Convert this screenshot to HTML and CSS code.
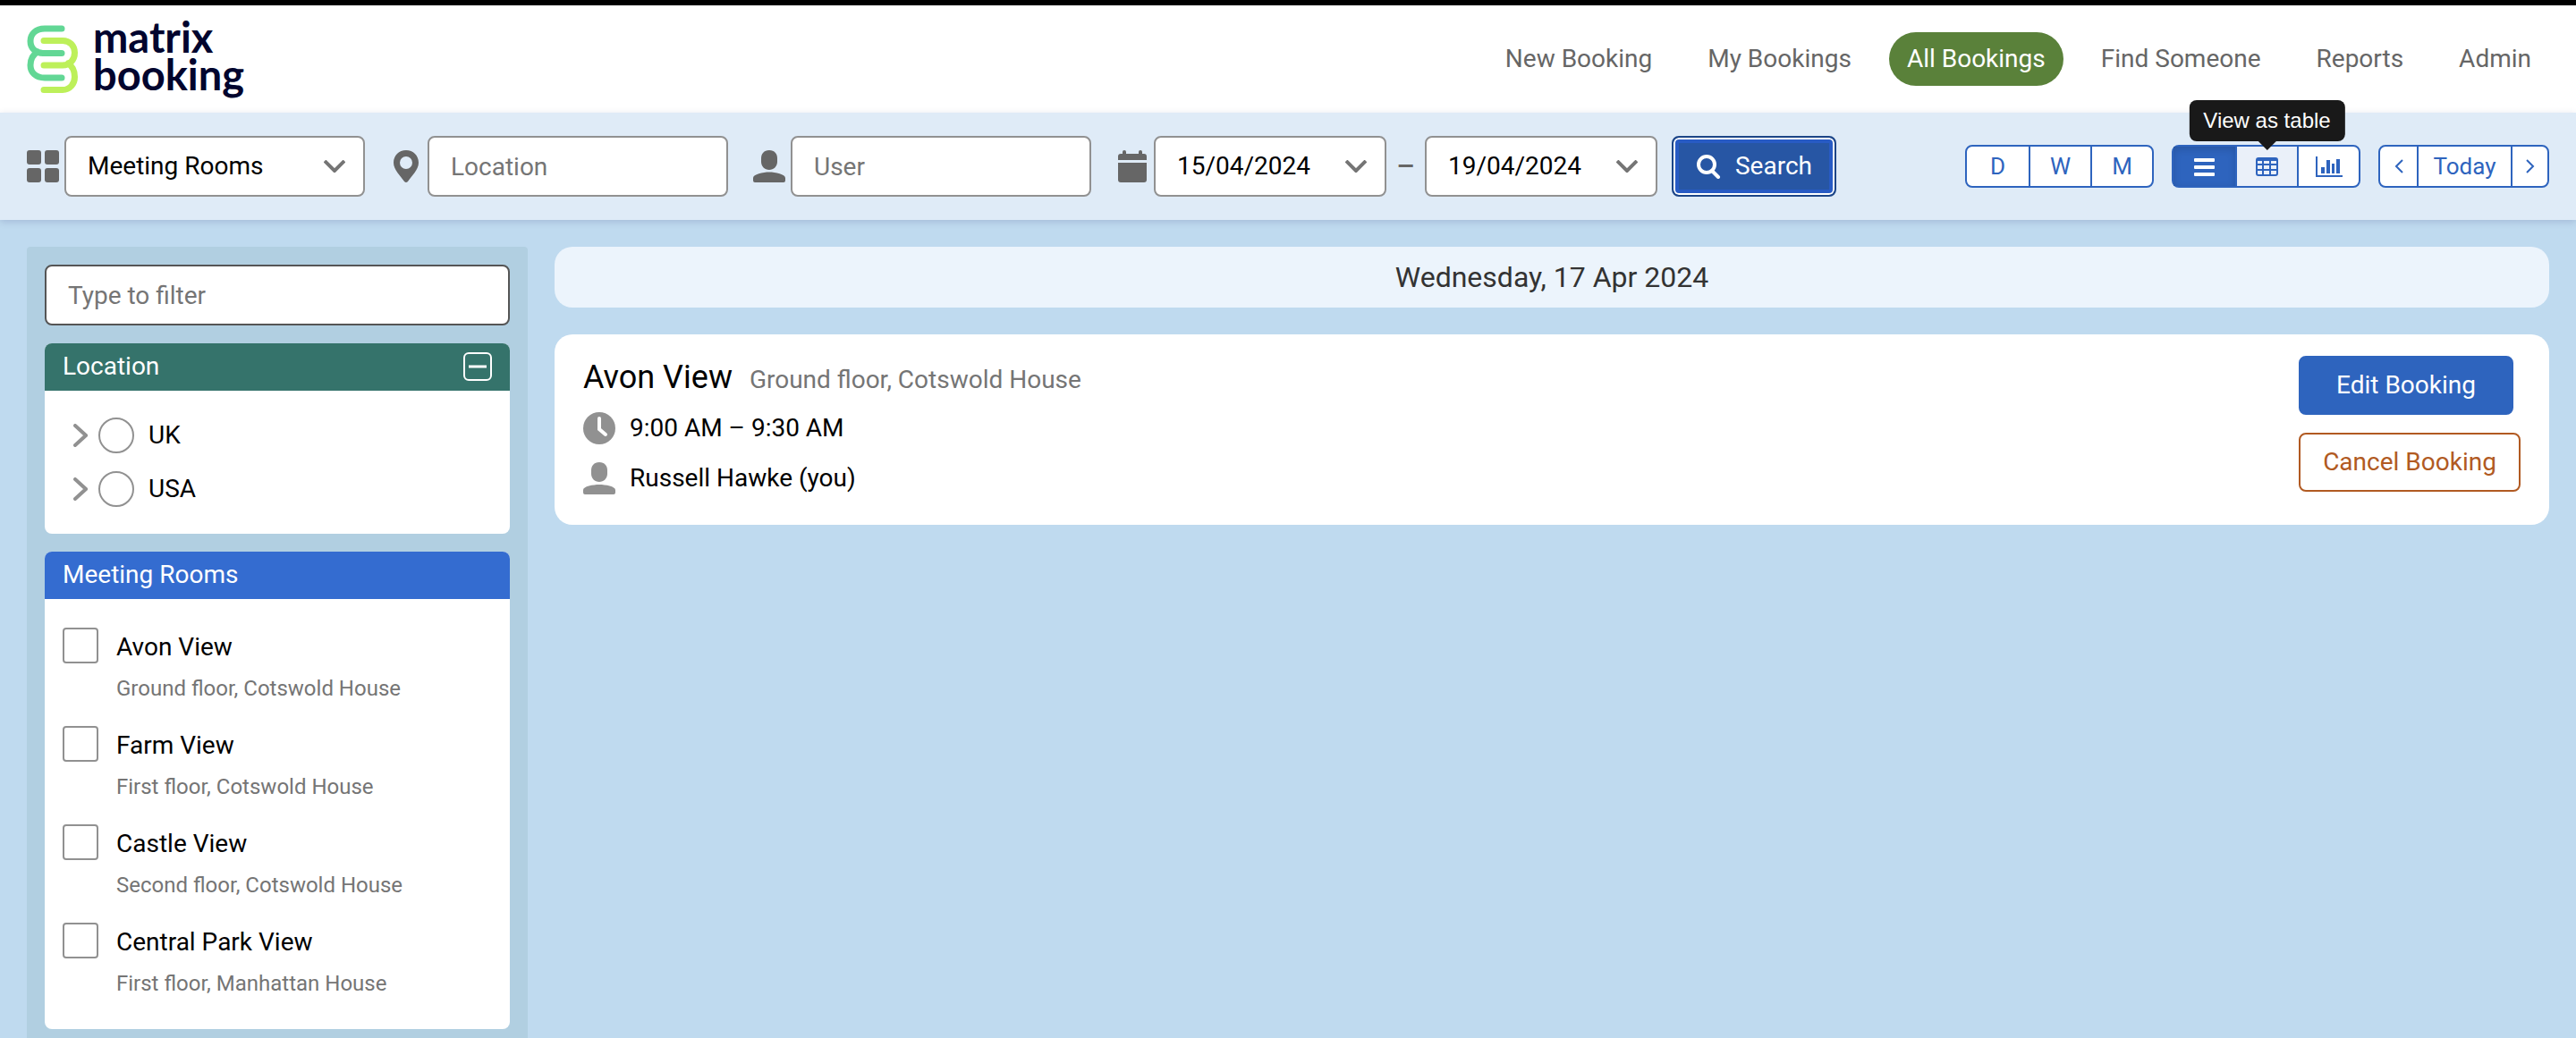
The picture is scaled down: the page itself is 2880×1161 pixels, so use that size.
FILE: index.html
```html
<!DOCTYPE html>
<html lang="en">
<head>
    <meta charset="UTF-8">
    <meta name="viewport" content="width=device-width, initial-scale=1.0">
    <title>All Bookings - Matrix Booking</title>
    <link rel="stylesheet" href="styles.css">
</head>
<body>

<header class="header">
    <a class="logo" href="#">
        <svg class="logo-mark" viewBox="0 0 58 77" fill="none" stroke-width="7" stroke-linecap="round" aria-hidden="true">
            <path stroke="#bdf05a" d="M19 17.500H40C48 17.500 53.500 23 53.500 31C53.500 39 48 45 40 45H19M46 43C51 46 53.500 51 53.500 58C53.500 66 48 72.500 40 72.500H19"/>
            <path stroke="#62d795" d="M39 4H20C10 4 4 10 4 18C4 26 10 31.500 18 31.500H39M12 30C7 33 4 38 4 45C4 53 10 59 20 59H39"/>
        </svg>
        <span class="logo-text">matrix<br>booking</span>
    </a>
    <nav class="nav">
        <a href="#">New Booking</a>
        <a href="#">My Bookings</a>
        <a href="#" class="active">All Bookings</a>
        <a href="#">Find Someone</a>
        <a href="#">Reports</a>
        <a href="#">Admin</a>
    </nav>
</header>

<form class="search-bar">
    <div class="field">
        <svg class="icon" viewBox="0 0 36 36" aria-hidden="true"><rect width="16" height="16" rx="3"/><rect x="20" width="16" height="16" rx="3"/><rect y="20" width="16" height="16" rx="3"/><rect x="20" y="20" width="16" height="16" rx="3"/></svg>
        <select class="control" aria-label="Resource type">
            <option>Meeting Rooms</option>
        </select>
    </div>
    <div class="field">
        <svg class="icon" viewBox="0 0 36 36" aria-hidden="true"><path fill-rule="evenodd" d="M18 0C10 0 4 6 4 14C4 22 12 29 16 35Q18 37 20 35C24 29 32 22 32 14C32 6 26 0 18 0ZM18 7A7 7 0 1 1 18 21A7 7 0 1 1 18 7Z"/></svg>
        <input class="control" type="text" placeholder="Location" aria-label="Location">
    </div>
    <div class="field">
        <svg class="icon" viewBox="0 0 36 36" aria-hidden="true"><path d="M18 0C24 0 27 4 27 9V13C27 18 23 22 18 22C13 22 9 18 9 13V9C9 4 12 0 18 0ZM0 31C0 27 11 24.500 18 24.500C25 24.500 36 27 36 31V34Q36 36 34 36H2Q0 36 0 34Z"/></svg>
        <input class="control" type="text" placeholder="User" aria-label="User">
    </div>
    <div class="field">
        <svg class="icon" viewBox="0 0 36 36" aria-hidden="true"><path d="M2 11V7Q2 4 5 4H7V2Q7 0 9 0Q11 0 11 2V4H25V2Q25 0 27 0Q29 0 29 2V4H31Q34 4 34 7V11ZM2 14H34V33Q34 36 31 36H5Q2 36 2 33Z"/></svg>
        <select class="control date" aria-label="From date">
            <option>15/04/2024</option>
        </select>
        <span class="dash">–</span>
        <select class="control date" aria-label="To date">
            <option>19/04/2024</option>
        </select>
        <button class="search-button" type="button">
            <svg viewBox="0 0 28 28" fill="none" stroke="#fff" stroke-width="4" stroke-linecap="round" aria-hidden="true"><circle cx="12" cy="12" r="9"/><path d="M18 19L25 26"/></svg>
            Search
        </button>
    </div>

    <div class="views">
        <div class="button-group">
            <button type="button">D</button>
            <button type="button">W</button>
            <button type="button">M</button>
        </div>
        <div class="button-group">
            <button type="button" class="selected" aria-label="View as list">
                <svg viewBox="0 0 26 26" fill="#fff" aria-hidden="true"><rect x="1" y="4" width="23" height="4" rx="1"/><rect x="1" y="12" width="23" height="4" rx="1"/><rect x="1" y="20" width="23" height="4" rx="1"/></svg>
            </button>
            <button type="button" class="hovered" aria-label="View as table">
                <svg viewBox="0 0 26 26" fill="none" stroke="#2e64be" stroke-width="2" aria-hidden="true"><rect x="1" y="4" width="23" height="19" rx="2"/><path d="M1 6H24M1 11H24M1 17H24M8 5V23M16 5V23"/></svg>
                <span class="tooltip" role="tooltip">View as table</span>
            </button>
            <button type="button" aria-label="View as chart">
                <svg viewBox="0 0 30 26" fill="#2e64be" aria-hidden="true"><path d="M0 2H2V23H30V25H0ZM6 14H10V21H6ZM12 6H16V21H12ZM18 10H21V21H18ZM23 5H27V21H23Z"/></svg>
            </button>
        </div>
        <div class="button-group stepper">
            <button type="button" aria-label="Previous">
                <svg viewBox="0 0 12 18" fill="none" stroke="#2e64be" stroke-width="2" aria-hidden="true"><path d="M10 2L3 9L10 16"/></svg>
            </button>
            <button type="button" class="today">Today</button>
            <button type="button" aria-label="Next">
                <svg viewBox="0 0 12 18" fill="none" stroke="#2e64be" stroke-width="2" aria-hidden="true"><path d="M2 2L9 9L2 16"/></svg>
            </button>
        </div>
    </div>
</form>

<main class="content">
    <aside class="sidebar">
        <input class="control filter" type="text" placeholder="Type to filter" aria-label="Type to filter">

        <section class="panel">
            <h2 class="panel-title location-title">
                Location
                <button type="button" class="collapse" aria-label="Collapse">
                    <svg viewBox="0 0 32 32" fill="none" stroke="#fff" stroke-width="2" aria-hidden="true"><rect x="1" y="1" width="30" height="30" rx="5"/><path d="M6 16H26" stroke-width="3"/></svg>
                </button>
            </h2>
            <ul class="locations">
                <li>
                    <button type="button" class="expand" aria-label="Expand UK"><svg viewBox="0 0 16 26" fill="none" stroke="#919191" stroke-width="4" stroke-linecap="round" aria-hidden="true"><path d="M2 2L14 13L2 24"/></svg></button>
                    <input type="radio" name="location" id="uk">
                    <label for="uk">UK</label>
                </li>
                <li>
                    <button type="button" class="expand" aria-label="Expand USA"><svg viewBox="0 0 16 26" fill="none" stroke="#919191" stroke-width="4" stroke-linecap="round" aria-hidden="true"><path d="M2 2L14 13L2 24"/></svg></button>
                    <input type="radio" name="location" id="usa">
                    <label for="usa">USA</label>
                </li>
            </ul>
        </section>

        <section class="panel">
            <h2 class="panel-title">Meeting Rooms</h2>
            <ul class="rooms">
                <li>
                    <input type="checkbox" id="avon">
                    <label for="avon">Avon View<small>Ground floor, Cotswold House</small></label>
                </li>
                <li>
                    <input type="checkbox" id="farm">
                    <label for="farm">Farm View<small>First floor, Cotswold House</small></label>
                </li>
                <li>
                    <input type="checkbox" id="castle">
                    <label for="castle">Castle View<small>Second floor, Cotswold House</small></label>
                </li>
                <li>
                    <input type="checkbox" id="central">
                    <label for="central">Central Park View<small>First floor, Manhattan House</small></label>
                </li>
            </ul>
        </section>
    </aside>

    <section class="bookings">
        <h2 class="day">Wednesday, 17 Apr 2024</h2>
        <article class="booking">
            <div class="details">
                <h3>Avon View <span>Ground floor, Cotswold House</span></h3>
                <p>
                    <svg class="icon" viewBox="0 0 36 36" aria-hidden="true"><circle cx="18" cy="18" r="18"/><path d="M18 7V19L25 25" fill="none" stroke="#fff" stroke-width="4" stroke-linecap="round"/></svg>
                    9:00 AM – 9:30 AM
                </p>
                <p>
                    <svg class="icon" viewBox="0 0 36 36" aria-hidden="true"><path d="M18 0C24 0 27 4 27 9V13C27 18 23 22 18 22C13 22 9 18 9 13V9C9 4 12 0 18 0ZM0 31C0 27 11 25 18 25C25 25 36 27 36 31V34Q36 36 34 36H2Q0 36 0 34Z"/></svg>
                    Russell Hawke (you)
                </p>
            </div>
            <div class="actions">
                <button type="button" class="edit">Edit Booking</button>
                <button type="button" class="cancel">Cancel Booking</button>
            </div>
        </article>
    </section>
</main>

</body>
</html>
```
FILE: styles.css
```css
* {
    box-sizing: border-box;
}

body {
    margin: 0;
    min-height: 100vh;
    display: flex;
    flex-direction: column;
    font-family: Roboto, Arial, sans-serif;
    font-size: 28px;
    line-height: 36px;
    color: #000;
    background: #bfdaef;
}

button,
input,
select {
    font: inherit;
    margin: 0;
}

button {
    cursor: pointer;
}

h2,
h3,
p,
ul {
    margin: 0;
    padding: 0;
    font-weight: 400;
    list-style: none;
}

/* header */
.header {
    display: flex;
    justify-content: space-between;
    align-items: center;
    height: 126px;
    padding: 0 30px;
    border-top: 6px solid #000;
    background: #fff;
}

.logo {
    display: flex;
    align-items: center;
    gap: 16px;
    color: #02052e;
    text-decoration: none;
}

.logo-mark {
    width: 58px;
    height: 77px;
}

.logo-text {
    font-family: Lato, sans-serif;
    font-size: 47px;
    font-weight: 700;
    line-height: 42px;
    padding-bottom: 8px;
}

.nav {
    display: flex;
    gap: 22px;
}

.nav a {
    padding: 12px 20px;
    border-radius: 30px;
    color: #666;
    text-decoration: none;
}

.nav .active {
    background: #5a813a;
    color: #fff;
}

/* search bar */
.search-bar {
    display: flex;
    align-items: center;
    gap: 28px;
    height: 120px;
    padding: 0 30px;
    background: #dfebf7;
    box-shadow: 0 2px 8px rgba(0, 0, 80, 0.15);
}

.field {
    display: flex;
    align-items: center;
    gap: 6px;
}

.icon {
    flex: none;
    width: 36px;
    height: 36px;
    fill: #666;
}

.control {
    width: 336px;
    height: 68px;
    padding: 0 24px;
    border: 2px solid #919191;
    border-radius: 8px;
    background: #fff;
    color: #000;
    outline: none;
}

.control::placeholder {
    color: #757575;
    opacity: 1;
}

select.control {
    appearance: none;
    background: #fff url("data:image/svg+xml,%3Csvg xmlns='http://www.w3.org/2000/svg' viewBox='0 0 24 14' fill='none' stroke='%23757575' stroke-width='4'%3E%3Cpath d='M1 1L12 12L23 1'/%3E%3C/svg%3E") no-repeat right 20px center / 24px 14px;
}

.control.date {
    width: 260px;
}

.dash {
    width: 31px;
    text-align: center;
    color: #666;
    font-size: 32px;
    font-weight: 500;
}

.search-button {
    display: flex;
    align-items: center;
    justify-content: center;
    gap: 16px;
    width: 184px;
    height: 68px;
    margin-left: 10px;
    border: 2px solid #1c4587;
    border-radius: 8px;
    background: #2756a4;
    box-shadow: inset 0 0 0 2px #fff, inset 0 0 0 6px #285bc4;
    color: #fff;
}

.search-button svg {
    width: 28px;
    height: 28px;
}

.views {
    display: flex;
    gap: 20px;
    margin-left: auto;
}

.button-group {
    display: flex;
    height: 48px;
    border: 2px solid #2e64be;
    border-radius: 8px;
    background: #fff;
}

.button-group button {
    position: relative;
    display: flex;
    align-items: center;
    justify-content: center;
    width: 69px;
    padding: 0;
    border: 0;
    background: none;
    color: #2e64be;
    font-size: 26px;
}

.button-group button + button {
    border-left: 2px solid #2e64be;
}

.button-group svg {
    height: 26px;
}

.button-group .selected {
    background: #2e64be;
    box-shadow: inset 0 3px 8px rgba(0, 0, 0, 0.15);
}

.button-group .hovered {
    background: #eaf0f9;
}

.stepper button {
    width: 41px;
}

.stepper .today {
    width: 105px;
}

.stepper svg {
    height: 18px;
}

.tooltip {
    position: absolute;
    bottom: calc(100% + 6px);
    left: 50%;
    transform: translateX(-50%);
    padding: 5px 16px;
    border-radius: 8px;
    background: #191919;
    color: #fff;
    font-family: "Liberation Sans", Arial, sans-serif;
    font-size: 24px;
    white-space: nowrap;
}

.tooltip::after {
    content: "";
    position: absolute;
    top: 100%;
    left: 50%;
    margin-left: -10px;
    border: 10px solid transparent;
    border-top-color: #191919;
    border-bottom: 0;
}

/* sidebar */
.content {
    flex: 1;
    display: flex;
    align-items: stretch;
    gap: 30px;
    padding: 30px 30px 0;
}

.sidebar {
    flex: none;
    display: flex;
    flex-direction: column;
    gap: 20px;
    width: 560px;
    padding: 20px 20px 10px;
    border-radius: 4px 4px 0 0;
    background: #b1cfe1;
}

.filter {
    width: 100%;
    border-color: #555;
}

.panel {
    border-radius: 8px;
    background: #fff;
    overflow: hidden;
}

.panel-title {
    display: flex;
    justify-content: space-between;
    align-items: center;
    height: 53px;
    padding: 0 20px 2px;
    background: #346cd0;
    color: #fff;
    font-size: 28px;
}

.location-title {
    background: #35736b;
}

.collapse {
    width: 32px;
    height: 32px;
    padding: 0;
    border: 0;
    background: none;
}

.collapse svg {
    display: block;
}

.locations {
    padding: 20px 32px;
}

.locations li {
    display: flex;
    align-items: center;
    height: 60px;
}

.expand {
    width: 16px;
    height: 26px;
    margin-right: 12px;
    padding: 0;
    border: 0;
    background: none;
}

.expand svg {
    display: block;
}

input[type="radio"],
input[type="checkbox"] {
    flex: none;
    appearance: none;
    width: 40px;
    height: 40px;
    border: 2px solid #919191;
    border-radius: 4px;
    background: #fff;
}

input[type="radio"] {
    margin-right: 16px;
    border-radius: 50%;
}

.rooms {
    display: flex;
    flex-direction: column;
    gap: 22px;
    padding: 32px 20px 31px;
}

.rooms li {
    display: flex;
    gap: 20px;
}

.rooms label {
    padding-top: 4px;
}

.rooms small {
    display: block;
    padding-top: 8px;
    color: #757575;
    font-size: 24px;
    line-height: 40px;
}

/* bookings */
.bookings {
    flex: 1;
}

.day {
    margin-bottom: 30px;
    padding: 16px;
    border-radius: 20px;
    background: #ecf4fc;
    color: #333;
    font-size: 32px;
    text-align: center;
}

.booking {
    display: flex;
    justify-content: space-between;
    padding: 24px 32px 34px;
    border-radius: 20px;
    background: #fff;
}

.details h3 {
    margin-bottom: 12px;
    font-size: 36px;
    line-height: 48px;
}

.details h3 span {
    margin-left: 10px;
    color: #757575;
    font-size: 28px;
}

.details p {
    display: flex;
    align-items: center;
    gap: 16px;
}

.details p + p {
    margin-top: 20px;
}

.details .icon {
    fill: #919191;
}

.actions {
    display: flex;
    flex-direction: column;
    align-items: flex-start;
    gap: 20px;
}

.actions button {
    min-width: 248px;
    height: 66px;
    padding: 0 24px;
    border: 2px solid #b15a22;
    border-radius: 8px;
    background: #fff;
    color: #b15a22;
}

.actions .edit {
    min-width: 240px;
    border-color: #2e64be;
    background: #2e64be;
    color: #fff;
}
```
